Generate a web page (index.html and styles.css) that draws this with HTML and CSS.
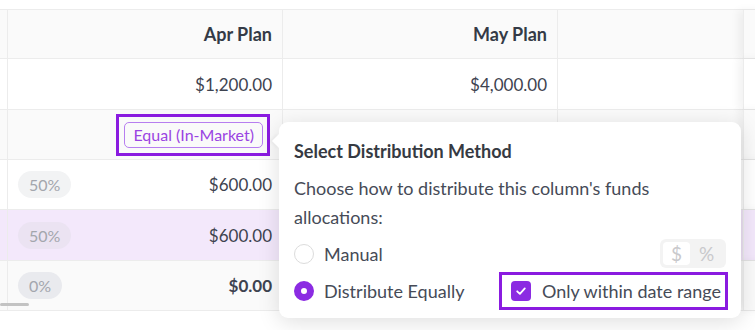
FILE: index.html
```html
<!DOCTYPE html>
<html lang="en">
<head>
    <meta charset="UTF-8">
    <meta name="viewport" content="width=device-width, initial-scale=1.0">
    <title>Plan Distribution</title>
    <link rel="stylesheet" href="styles.css">
</head>
<body>

    <div class="board">
        <!-- Plan table -->
        <div class="table">
            <div class="row head">
                <div class="cell edge"></div>
                <div class="cell num">Apr Plan</div>
                <div class="cell num">May Plan</div>
                <div class="cell last"></div>
                <div class="cell pin"></div>
            </div>

            <div class="row tall">
                <div class="cell edge"></div>
                <div class="cell num">$1,200.00</div>
                <div class="cell num">$4,000.00</div>
                <div class="cell last"></div>
                <div class="cell pin"></div>
            </div>

            <div class="row grey">
                <div class="cell edge"></div>
                <div class="cell num">
                    <span class="badge-frame">
                        <span class="method-badge">Equal (In-Market)</span>
                    </span>
                </div>
                <div class="cell num">
                    <span class="method-button"></span>
                </div>
                <div class="cell last"></div>
                <div class="cell pin"></div>
            </div>

            <div class="row">
                <div class="cell edge"></div>
                <div class="cell split">
                    <span class="pct">50%</span>
                    <span>$600.00</span>
                </div>
                <div class="cell"></div>
                <div class="cell last"></div>
                <div class="cell pin"></div>
            </div>

            <div class="row tall selected">
                <div class="cell edge"></div>
                <div class="cell split">
                    <span class="pct">50%</span>
                    <span>$600.00</span>
                </div>
                <div class="cell"></div>
                <div class="cell last"></div>
                <div class="cell pin"></div>
            </div>

            <div class="row grey">
                <div class="cell edge"></div>
                <div class="cell split">
                    <span class="pct zero">0%</span>
                    <strong>$0.00</strong>
                </div>
                <div class="cell"></div>
                <div class="cell last"></div>
                <div class="cell pin"></div>
            </div>
        </div>

        <div class="scrollbar"></div>

        <!-- Distribution popover -->
        <div class="popover">
            <h3 class="popover-title">Select Distribution Method</h3>
            <p class="popover-text">Choose how to distribute this column's funds allocations:</p>

            <div class="option-row">
                <label class="radio">
                    <span class="radio-dot"></span>
                    Manual
                </label>
                <div class="unit-toggle">
                    <span class="unit active">$</span>
                    <span class="unit">%</span>
                </div>
            </div>

            <div class="option-row">
                <label class="radio">
                    <span class="radio-dot checked"></span>
                    Distribute Equally
                </label>
                <label class="check highlight">
                    <span class="check-box">
                        <svg width="14" height="14" viewBox="0 0 14 14">
                            <path d="M3.2 7.3 L5.9 9.9 L10.8 4.4" fill="none" stroke="#fff" stroke-width="1.8" stroke-linecap="round" stroke-linejoin="round"/>
                        </svg>
                    </span>
                    Only within date range
                </label>
            </div>
        </div>
    </div>

</body>
</html>
```

FILE: styles.css
```css
* {
    box-sizing: border-box;
}

body {
    margin: 0;
    font-family: Lato, "Liberation Sans", sans-serif;
    color: #3e4350;
    background: #fff;
}

.board {
    position: relative;
    width: 755px;
    height: 330px;
    overflow: hidden;
    padding-top: 9px;
}

.table {
    border-top: 1px solid #ececec;
}

.row {
    display: grid;
    grid-template-columns: 8px 275px 275px 185px 12px;
    height: 50px;
    border-bottom: 1px solid #ececec;
    background: #fff;
    font-size: 17px;
}

.row.tall {
    height: 51px;
}

.row.head {
    height: 49px;
    background: #fafafa;
    font-weight: bold;
    font-size: 18px;
    color: #343a46;
}

.row.grey {
    background: #fafafa;
}

.row.selected {
    background: #f3e8fb;
}

.cell {
    display: flex;
    align-items: center;
    border-right: 1px solid #ececec;
    padding: 0 10px;
    background: inherit;
}

.cell.edge {
    padding: 0;
}

.cell.last {
    border-right: none;
}

.cell.num {
    justify-content: flex-end;
}

.cell.split {
    justify-content: space-between;
    padding-left: 10px;
}

.cell.pin {
    position: relative;
    border-right: none;
    border-left: 1px solid #ececec;
    box-shadow: -5px 0 8px rgba(0, 0, 0, 0.05);
}

.pct {
    display: inline-block;
    height: 27px;
    line-height: 27px;
    padding: 0 11px;
    border-radius: 14px;
    background: #f2f3f4;
    color: #a3a6ad;
    font-size: 16px;
}

.row.selected .pct {
    background: #ebe3f2;
}

.pct.zero {
    background: #e9eaee;
}

.badge-frame {
    display: inline-block;
    margin-right: 2px;
    padding: 5px 4px 5px 5px;
    border: 3px solid #8a1be0;
}

.method-badge {
    display: block;
    padding: 0 8px;
    height: 26px;
    line-height: 24px;
    border: 1px solid #b77ef0;
    border-radius: 5px;
    color: #9a44e2;
    font-size: 16px;
}

.method-button {
    display: inline-block;
    width: 54px;
    height: 26px;
    margin-right: 11px;
    margin-top: 3px;
    border-radius: 5px;
    background: #7a2cc4;
}

.scrollbar {
    position: absolute;
    left: 0;
    top: 303px;
    width: 29px;
    height: 3px;
    border-radius: 2px;
    background: #c3c3c3;
}

/* popover */
.popover {
    position: absolute;
    left: 279px;
    top: 122px;
    width: 462px;
    padding: 15px 15px 8px;
    background: #fff;
    border-radius: 9px;
    box-shadow: 0 4px 22px rgba(0, 0, 0, 0.13);
    z-index: 2;
    font-size: 18px;
    color: #464b57;
}

.popover::before {
    content: "";
    position: absolute;
    left: -5px;
    top: 14px;
    width: 10px;
    height: 10px;
    background: #fff;
    transform: rotate(45deg);
    box-shadow: -2px 2px 3px rgba(0, 0, 0, 0.04);
}

.popover-title {
    margin: 0;
    font-size: 18px;
    line-height: 28px;
    font-weight: bold;
    color: #363a42;
}

.popover-text {
    margin: 9px 0 8px;
    line-height: 28.5px;
    padding-right: 40px;
}

.option-row {
    display: flex;
    justify-content: space-between;
    align-items: center;
}

.option-row + .option-row {
    margin-top: 4px;
}

.radio {
    display: flex;
    align-items: center;
    gap: 10px;
}

.radio-dot {
    width: 20px;
    height: 20px;
    border-radius: 50%;
    border: 1px solid #dcdcdc;
}

.radio-dot.checked {
    border: 7px solid #8b2be2;
}

.unit-toggle {
    display: flex;
    padding: 3px;
    border-radius: 6px;
    background: #f3f3f3;
}

.unit {
    width: 33px;
    height: 23px;
    line-height: 23px;
    text-align: center;
    color: #c9c9cc;
    border-radius: 4px;
    font-size: 19px;
}

.unit.active {
    width: 27px;
    background: #fff;
}

.check {
    display: flex;
    align-items: center;
    gap: 11px;
    height: 32px;
    padding: 0 4px 0 9px;
    margin: 3px 1px 3px 0;
}

.highlight {
    outline: 3px solid #8a1be0;
}

.check-box {
    display: flex;
    align-items: center;
    justify-content: center;
    width: 20px;
    height: 20px;
    border-radius: 4px;
    background: #8b2be2;
}
```
